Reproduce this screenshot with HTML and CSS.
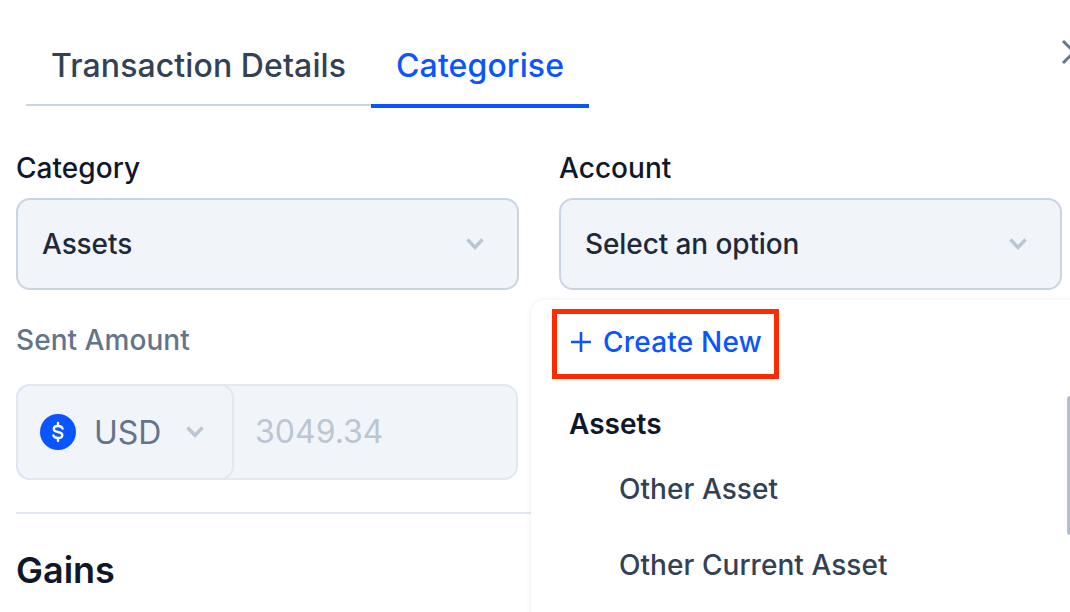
FILE: index.html
```html
<!DOCTYPE html>
<html lang="en">
<head>
<meta charset="utf-8">
<title>Categorise</title>
<link rel="stylesheet" href="styles.css">
</head>
<body>
<div class="panel">
  <svg class="close" width="24" height="24" viewBox="0 0 24 24"><path d="M1 1 L23 23 M23 1 L1 23"/></svg>
  <div class="tabs">
    <div class="tab">Transaction Details</div>
    <div class="tab active">Categorise</div>
  </div>
  <div class="row">
    <div class="field">
      <div class="label">Category</div>
      <div class="select">
        <span class="value">Assets</span>
        <svg class="chev" viewBox="0 0 18 12"><path d="M1.5 1.5 L9 9.5 L16.5 1.5"/></svg>
      </div>
    </div>
    <div class="field">
      <div class="label">Account</div>
      <div class="select">
        <span class="value">Select an option</span>
        <svg class="chev" viewBox="0 0 18 12"><path d="M1.5 1.5 L9 9.5 L16.5 1.5"/></svg>
      </div>
    </div>
  </div>
  <div class="amount-block">
    <div class="label muted">Sent Amount</div>
    <div class="amount">
      <div class="currency">
        <svg class="coin" width="36" height="36" viewBox="0 0 36 36">
          <circle cx="18" cy="18" r="18" fill="#0a55ff"/>
          <path d="M22.6 14.6 C22 12.8 20.4 12 18 12 C15.4 12 13.8 13.2 13.8 15 C13.8 17 15.6 17.6 18 18 C20.5 18.5 22.3 19.2 22.3 21.2 C22.3 23 20.6 24 18 24 C15.6 24 13.9 23.2 13.4 21.4 M18 9 V12 M18 24 V27"/>
        </svg>
        <span class="code">USD</span>
        <svg class="chev small" viewBox="0 0 18 12"><path d="M1.5 1.5 L9 9.5 L16.5 1.5"/></svg>
      </div>
      <div class="number">3049.34</div>
    </div>
  </div>
  <div class="divider"></div>
  <h2 class="section">Gains</h2>

  <div class="menu">
    <div class="create">
      <svg class="plus" width="22" height="22" viewBox="0 0 22 22"><path d="M11 1 V21 M1 11 H21"/></svg>
      <span>Create New</span>
    </div>
    <div class="group">Assets</div>
    <div class="option">Other Asset</div>
    <div class="option">Other Current Asset</div>
    <div class="scrollbar"></div>
  </div>
</div>
</body>
</html>
```
FILE: styles.css
```css
* { box-sizing: border-box; }
html, body { margin: 0; height: 100%; overflow: hidden; background: #fff; }
body { font-family: Inter, "Liberation Sans", sans-serif; color: #0f172a; }

.panel { position: relative; width: 1070px; height: 612px; padding: 24px 8px 0 16px; overflow: hidden; }

.close { position: absolute; left: 1062px; top: 40px; }
.close path { fill: none; stroke: #64748b; stroke-width: 3; }

.tabs { display: flex; align-items: flex-start; margin-left: 10px; height: 84px; }
.tab { padding: 0 25px; height: 82px; line-height: 83px; font-size: 32px; font-weight: 450; letter-spacing: 0.1px; color: #334155; border-bottom: 2px solid #cbd5e1; white-space: nowrap; }
.tab.active { height: 84px; color: #0a55ff; border-bottom: 4px solid #0a55ff; }

.row { display: grid; grid-template-columns: 503px 503px; column-gap: 40px; margin-top: 40px; }
.label { font-size: 28px; font-weight: 450; line-height: 40px; height: 40px; letter-spacing: 0.05px; }
.label.muted { color: #64748b; }
.field .label { margin-bottom: 10px; }

.select { display: flex; align-items: center; justify-content: space-between; height: 92px; padding: 0 33px 0 24px; background: #f1f5f9; border: 2px solid #cbd5e1; border-radius: 14px; }
.value { font-size: 28px; color: #1e293b; font-weight: 450; letter-spacing: -0.1px; }
.chev { width: 18px; height: 12px; flex: none; }
.chev path { fill: none; stroke: #bcc6d3; stroke-width: 3.4; }

.amount-block { margin-top: 30px; width: 502px; }
.amount { display: flex; height: 96px; margin-top: 24px; background: #f1f5f9; border: 2px solid #e2e8f0; border-radius: 14px; }
.currency { display: flex; align-items: center; width: 218px; padding-left: 22px; margin: -2px 0 -2px -2px; border: 2px solid #e2e8f0; border-radius: 14px; }
.coin { flex: none; }
.coin path { fill: none; stroke: #fff; stroke-width: 2.3; stroke-linecap: round; }
.code { margin-left: 18px; font-size: 32px; color: #64748b; }
.chev.small { margin-left: 25px; }
.number { padding-left: 21px; line-height: 92px; font-size: 32px; color: #bcc6d3; }

.divider { height: 2px; background: #e2e8f0; margin-top: 32px; width: 520px; }
.section { margin: 31px 0 0; font-size: 36px; font-weight: 600; line-height: 50px; color: #0f172a; }

.menu { position: absolute; left: 531px; top: 300px; width: 560px; height: 340px; padding: 9px 0 0 21px; background: #fff; border-radius: 14px; box-shadow: 0 0 5px rgba(100, 116, 139, 0.16); }
.create { display: flex; align-items: center; gap: 11px; width: 227px; height: 70px; padding: 0 0 4px 14px; border: 5px solid #ff2a00; font-size: 28px; font-weight: 450; letter-spacing: 0.2px; color: #0a55ff; white-space: nowrap; }
.plus { flex: none; margin-left: -1px; }
.plus path { fill: none; stroke: #0a55ff; stroke-width: 2.6; }
.group { margin-top: 25px; padding-left: 17px; font-size: 28px; font-weight: 600; line-height: 40px; color: #0f172a; }
.option { padding-left: 67px; height: 76px; line-height: 76px; font-size: 28px; font-weight: 450; letter-spacing: 0.05px; color: #334155; }
.group + .option { margin-top: 7px; }
.scrollbar { position: absolute; left: 536px; top: 96px; width: 6px; height: 139px; border-radius: 3px; background: #b6bfcb; }
```
